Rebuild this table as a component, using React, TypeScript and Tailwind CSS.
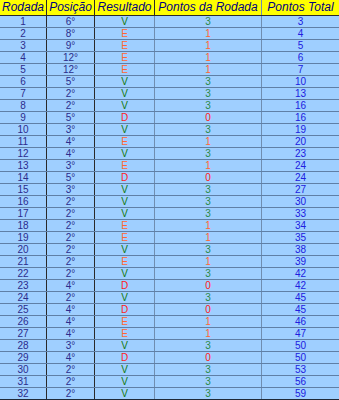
import React from "react";

type Row = [number, number, "V" | "E" | "D", number, number];

const rows: Row[] = [
  [1, 6, "V", 3, 3],
  [2, 8, "E", 1, 4],
  [3, 9, "E", 1, 5],
  [4, 12, "E", 1, 6],
  [5, 12, "E", 1, 7],
  [6, 5, "V", 3, 10],
  [7, 2, "V", 3, 13],
  [8, 2, "V", 3, 16],
  [9, 5, "D", 0, 16],
  [10, 3, "V", 3, 19],
  [11, 4, "E", 1, 20],
  [12, 4, "V", 3, 23],
  [13, 3, "E", 1, 24],
  [14, 5, "D", 0, 24],
  [15, 3, "V", 3, 27],
  [16, 2, "V", 3, 30],
  [17, 2, "V", 3, 33],
  [18, 2, "E", 1, 34],
  [19, 2, "E", 1, 35],
  [20, 2, "V", 3, 38],
  [21, 2, "E", 1, 39],
  [22, 2, "V", 3, 42],
  [23, 4, "D", 0, 42],
  [24, 2, "V", 3, 45],
  [25, 4, "D", 0, 45],
  [26, 4, "E", 1, 46],
  [27, 4, "E", 1, 47],
  [28, 3, "V", 3, 50],
  [29, 4, "D", 0, 50],
  [30, 2, "V", 3, 53],
  [31, 2, "V", 3, 56],
  [32, 2, "V", 3, 59],
];

const resColor = {
  V: "text-[#127a12]",
  E: "text-[#ff6633]",
  D: "text-[#ff2020]",
};

export default function App() {
  return (
    <div className="h-[400px] w-[339px] overflow-hidden bg-white font-['Liberation_Sans',Arial,sans-serif]">
      <div className="grid grid-cols-[47px_48px_60px_107px_77px] border-b border-[#2a2a2a] bg-[#ffff00] text-[12px] italic leading-[15px] text-[#000080]">
        <div className="border-r border-[#2a2a2a] text-center">Rodada</div>
        <div className="border-r border-[#2a2a2a] text-center">Posição</div>
        <div className="border-r border-[#2a2a2a] text-center">Resultado</div>
        <div className="border-r border-[#6f8db0] text-center">Pontos da Rodada</div>
        <div className="text-center">Pontos Total</div>
      </div>
      <div className="border-b border-[#1f2a38] bg-[#9fcfff] text-[10px] leading-[11px]">
        {rows.map(([r, pos, res, pts, total], i) => (
          <div
            key={r}
            className={`grid grid-cols-[47px_48px_60px_107px_77px] ${
              i < rows.length - 1 ? "border-b border-[#5f7fa6]" : ""
            }`}
          >
            <div className="border-r border-[#2a2a2a] text-center text-[#2c2c8c]">
              {r}
            </div>
            <div className="border-r border-[#2a2a2a] text-center text-[#2c2c8c]">
              {pos}°
            </div>
            <div
              className={`border-r border-[#6f8db0] text-center ${resColor[res]}`}
            >
              {res}
            </div>
            <div
              className={`border-r border-[#6f8db0] text-center ${
                pts === 3
                  ? "text-[#2a8a4a]"
                  : pts === 1
                    ? "text-[#ff6633]"
                    : "text-[#ff2020]"
              }`}
            >
              {pts}
            </div>
            <div className="text-center text-[#2020e0]">{total}</div>
          </div>
        ))}
      </div>
    </div>
  );
}
